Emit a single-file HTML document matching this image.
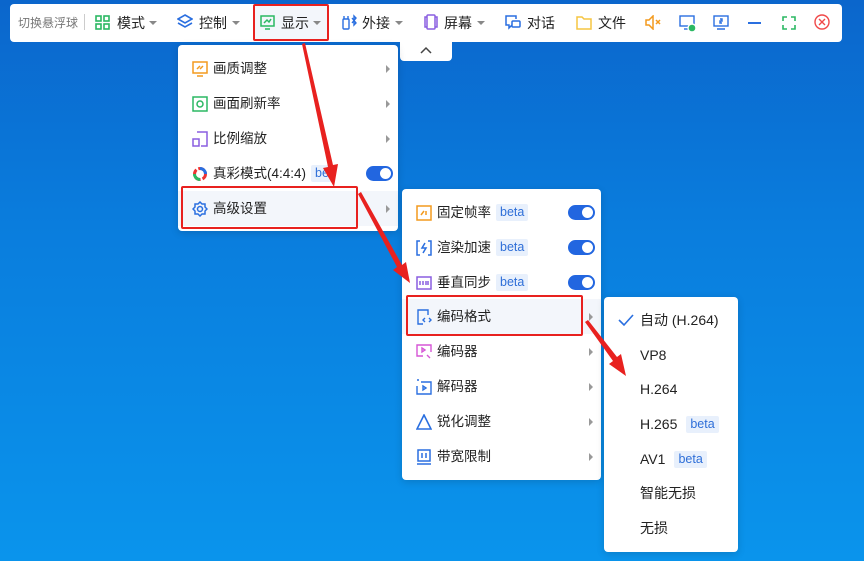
<!DOCTYPE html>
<html><head><meta charset="utf-8"><style>
*{margin:0;padding:0;box-sizing:border-box}
body{width:864px;height:561px;overflow:hidden;position:relative;font-family:"Liberation Sans","Noto Sans CJK SC",sans-serif;background:linear-gradient(180deg,#0b66cc 0%,#0a7ddd 40%,#0a94ec 100%);color:#222}
.abs{position:absolute}
.bar{left:10px;top:4px;width:832px;height:38px;background:#fff;border-radius:4px}
.t{position:absolute;font-size:14px;top:15px;line-height:16px;color:#222}
.caret{position:absolute;top:21px;width:0;height:0;border-left:4px solid transparent;border-right:4px solid transparent;border-top:4px solid #888}
.menu{position:absolute;background:#fff;border-radius:4px;box-shadow:0 2px 8px rgba(0,0,0,.15)}
.it{position:absolute;left:0;right:0;height:35px;font-size:13.5px;line-height:35px}
.it .tx{position:absolute;left:35px}
.it svg{position:absolute;left:14px;top:10px}
.arr{position:absolute;right:8px;top:14px;border-top:4px solid transparent;border-bottom:4px solid transparent;border-left:4px solid #999}
.beta{display:inline-block;background:#e8f0fc;color:#2f6fd8;font-size:12.5px;line-height:17px;padding:0 4px;border-radius:2px;margin-left:5px;vertical-align:1px}
.tg{position:absolute;width:27px;height:15px;border-radius:8px;background:#2266e0;top:10px}
.tg:after{content:"";position:absolute;right:2px;top:2px;width:11px;height:11px;border-radius:50%;background:#fff}
.red{position:absolute;border:2px solid #e8211f;border-radius:2px}
</style></head><body>
<div class="abs bar"></div>
<div class="t" style="left:18px;font-size:12px;color:#777">切换悬浮球</div>
<div class="abs" style="left:84px;top:14px;width:1px;height:16px;background:#ccc"></div>
<svg class="abs" style="left:95px;top:15px" width="15" height="15" fill="none" stroke="#2bb863" stroke-width="1.6"><rect x="1" y="1" width="5" height="5"/><rect x="9" y="1" width="5" height="5"/><rect x="1" y="9" width="5" height="5"/><rect x="9" y="9" width="5" height="5"/></svg>
<div class="t" style="left:117px">模式</div><div class="caret" style="left:149px"></div>
<svg class="abs" style="left:177px;top:14px" width="16" height="16" fill="none" stroke="#2a6fe0" stroke-width="1.6"><path d="M8 1L15 5L8 9L1 5Z"/><path d="M1 9L8 13L15 9"/></svg>
<div class="t" style="left:199px">控制</div><div class="caret" style="left:232px"></div>
<div class="abs" style="left:253px;top:5px;width:75px;height:35px;background:#f3f6fb"></div>
<svg class="abs" style="left:260px;top:15px" width="15" height="15" fill="none" stroke="#2bb863" stroke-width="1.5"><rect x="1" y="1" width="13" height="10"/><path d="M4 8L7 5L9 7L11 4M5 14H10"/></svg>
<div class="t" style="left:281px">显示</div><div class="caret" style="left:313px"></div>
<div class="red" style="left:253px;top:4px;width:76px;height:37px"></div>
<svg class="abs" style="left:341px;top:14px" width="16" height="16" fill="none" stroke="#2a6fe0" stroke-width="1.4"><rect x="2" y="5" width="6" height="10" rx="1"/><path d="M3 5V2M7 5V2M11 4L15 9L13 11V2L15 4L11 9"/></svg>
<div class="t" style="left:362px">外接</div><div class="caret" style="left:395px"></div>
<svg class="abs" style="left:423px;top:14px" width="16" height="16" fill="none" stroke="#8a5fe0" stroke-width="1.5"><rect x="4" y="1" width="8" height="14" rx="1"/><path d="M4 3H2V13H4M12 3H14V13H12"/></svg>
<div class="t" style="left:444px">屏幕</div><div class="caret" style="left:477px"></div>
<svg class="abs" style="left:505px;top:15px" width="16" height="15" fill="none" stroke="#2a6fe0" stroke-width="1.5"><path d="M11 4V1H1V10H4V13L7 10"/><rect x="7" y="6" width="8" height="6" rx="1"/></svg>
<div class="t" style="left:527px">对话</div>
<svg class="abs" style="left:576px;top:15px" width="16" height="15" fill="none" stroke="#f5c542" stroke-width="1.5"><path d="M1 2H6L8 4H15V14H1Z"/></svg>
<div class="t" style="left:598px">文件</div>
<svg class="abs" style="left:645px;top:15px" width="18" height="15" fill="none" stroke="#f39a1e" stroke-width="1.5"><path d="M1 5H4L8 1V14L4 10H1Z"/><path d="M11 5L15 9M15 5L11 9"/></svg>
<svg class="abs" style="left:679px;top:15px" width="18" height="18" fill="none" stroke="#2a6fe0" stroke-width="1.4"><rect x="1" y="1" width="14" height="10"/><path d="M5 14H10"/><circle cx="13" cy="13" r="4" fill="#2bb863" stroke="#fff"/></svg>
<svg class="abs" style="left:713px;top:15px" width="16" height="15" fill="none" stroke="#2a6fe0" stroke-width="1.4"><rect x="1" y="1" width="14" height="10"/><path d="M4 14H12M7 4H9V6H7V8H9"/></svg>
<div class="abs" style="left:748px;top:22px;width:13px;height:2px;background:#2a6fe0"></div>
<svg class="abs" style="left:782px;top:16px" width="14" height="14" fill="none" stroke="#2bb863" stroke-width="1.6"><path d="M1 5V1H5M9 1H13V5M13 9V13H9M5 13H1V9"/></svg>
<svg class="abs" style="left:814px;top:14px" width="16" height="16" fill="none" stroke="#f04848" stroke-width="1.4"><circle cx="8" cy="8" r="7"/><path d="M5 5L11 11M11 5L5 11"/></svg>

<div class="abs" style="left:400px;top:40px;width:52px;height:21px;background:#fff;border-radius:0 0 4px 4px"></div>
<svg class="abs" style="left:420px;top:46px" width="12" height="8" fill="none" stroke="#444" stroke-width="1.5"><path d="M1 7L6 2L11 7"/></svg>

<div class="menu" style="left:178px;top:45px;width:220px;height:186px">
 <div class="it" style="top:6px"><svg width="16" height="16" fill="none" stroke="#f39a1e" stroke-width="1.5"><rect x="1" y="1" width="14" height="11"/><path d="M5 15H11M5 8L8 5M8 8L11 5"/></svg><span class="tx">画质调整</span><i class="arr"></i></div>
 <div class="it" style="top:41px"><svg width="16" height="16" fill="none" stroke="#2bb863" stroke-width="1.5"><rect x="1" y="1" width="14" height="14"/><circle cx="8" cy="8" r="3"/></svg><span class="tx">画面刷新率</span><i class="arr"></i></div>
 <div class="it" style="top:76px"><svg width="16" height="16" fill="none" stroke="#8a5fe0" stroke-width="1.5"><path d="M5 1H15V15H9"/><rect x="1" y="8" width="6" height="7"/></svg><span class="tx">比例缩放</span><i class="arr"></i></div>
 <div class="it" style="top:111px"><svg width="16" height="16" fill="none" stroke-width="3"><circle cx="8" cy="8" r="5.5" stroke="#e33" stroke-dasharray="6 2"/><path d="M8 2.5A5.5 5.5 0 0 1 13.5 8" stroke="#2a6fe0"/><path d="M8 13.5A5.5 5.5 0 0 1 2.5 8" stroke="#2bb863"/></svg><span class="tx">真彩模式(4:4:4)<span class="beta">beta</span></span><div style="position:absolute;left:156px;top:8px;width:40px;height:20px;background:#fff"></div><div class="tg" style="left:188px"></div></div>
 <div class="it" style="top:146px;background:#f3f6fb"><svg width="16" height="16" fill="none" stroke="#2a6fe0" stroke-width="1.5"><circle cx="8" cy="8" r="2.5"/><path d="M8 1L10 3L13 3L13 6L15 8L13 10L13 13L10 13L8 15L6 13L3 13L3 10L1 8L3 6L3 3L6 3Z"/></svg><span class="tx">高级设置</span><i class="arr"></i></div>
</div>
<div class="red" style="left:181px;top:186px;width:177px;height:43px"></div>

<div class="menu" style="left:402px;top:189px;width:199px;height:291px">
 <div class="it" style="top:6px"><svg width="16" height="16" fill="none" stroke="#f39a1e" stroke-width="1.5"><rect x="1" y="1" width="14" height="14"/><path d="M5 10L8 6M10 6V10"/></svg><span class="tx">固定帧率<span class="beta">beta</span></span><div class="tg" style="left:166px"></div></div>
 <div class="it" style="top:41px"><svg width="16" height="16" fill="none" stroke="#2a6fe0" stroke-width="1.5"><path d="M4 1H1V15H4M12 1H15V15H12M9 3L6 8H10L7 13"/></svg><span class="tx">渲染加速<span class="beta">beta</span></span><div class="tg" style="left:166px"></div></div>
 <div class="it" style="top:76px"><svg width="16" height="16" fill="none" stroke="#8a5fe0" stroke-width="1.5"><rect x="1" y="2" width="14" height="12"/><path d="M4 6V10M7 6V10M10 6V10M12 6V10"/></svg><span class="tx">垂直同步<span class="beta">beta</span></span><div class="tg" style="left:166px"></div></div>
 <div class="it" style="top:110px;background:#f3f6fb"><svg width="16" height="16" fill="none" stroke="#2a6fe0" stroke-width="1.4"><path d="M12 6V1H2V15H7"/><path d="M9 9L7 11L9 13M13 9L15 11L13 13"/></svg><span class="tx">编码格式</span><i class="arr"></i></div>
 <div class="it" style="top:145px"><svg width="16" height="16" fill="none" stroke="#d656d6" stroke-width="1.4"><path d="M15 8V1H1V12H7"/><path d="M6 4L9 6L6 8Z M11 11L14 14"/></svg><span class="tx">编码器</span><i class="arr"></i></div>
 <div class="it" style="top:180px"><svg width="16" height="16" fill="none" stroke="#2a6fe0" stroke-width="1.4"><path d="M5 3H15V15H1V7"/><path d="M7 7L10 9L7 11Z M1 1H3"/></svg><span class="tx">解码器</span><i class="arr"></i></div>
 <div class="it" style="top:215px"><svg width="16" height="16" fill="none" stroke="#2a6fe0" stroke-width="1.6"><path d="M8 1L15 15H1Z"/></svg><span class="tx">锐化调整</span><i class="arr"></i></div>
 <div class="it" style="top:250px"><svg width="16" height="16" fill="none" stroke="#2a6fe0" stroke-width="1.5"><rect x="2" y="1" width="12" height="11"/><path d="M1 15H15M6 4V9M10 4V9"/></svg><span class="tx">带宽限制</span><i class="arr"></i></div>
</div>
<div class="red" style="left:406px;top:295px;width:177px;height:41px"></div>

<div class="menu" style="left:604px;top:297px;width:134px;height:255px">
 <div class="it" style="top:6px;font-size:14px"><svg width="16" height="16" fill="none" stroke="#2a6fe0" stroke-width="1.6" style="top:9px"><path d="M1 8L6 13L15 3"/></svg><span class="tx" style="left:36px">自动 (H.264)</span></div>
 <div class="it" style="top:41px;font-size:14px"><span class="tx" style="left:36px">VP8</span></div>
 <div class="it" style="top:75px;font-size:14px"><span class="tx" style="left:36px">H.264</span></div>
 <div class="it" style="top:110px;font-size:14px"><span class="tx" style="left:36px">H.265<span class="beta" style="margin-left:9px">beta</span></span></div>
 <div class="it" style="top:145px;font-size:14px"><span class="tx" style="left:36px">AV1<span class="beta" style="margin-left:9px">beta</span></span></div>
 <div class="it" style="top:179px;font-size:14px"><span class="tx" style="left:36px">智能无损</span></div>
 <div class="it" style="top:214px;font-size:14px"><span class="tx" style="left:36px">无损</span></div>
</div>

<svg class="abs" style="left:0;top:0" width="864" height="561">
 <g fill="#e8211f">
  <polygon points="302,44 305,43 333,165 338,164 334,187 323,168 328,167"/>
  <polygon points="358,194 361,192 402,265 406,262 410,283 393,270 397,267"/>
  <polygon points="585,322 588,320 617,357 621,354 626,376 609,364 613,361"/>
 </g>
</svg>
</body></html>
